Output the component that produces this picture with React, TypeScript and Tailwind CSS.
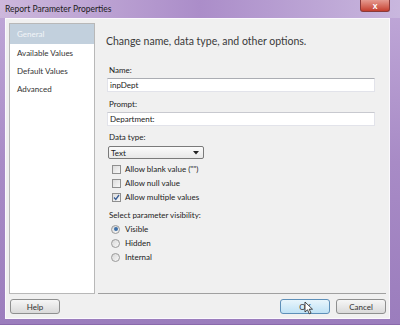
import React from 'react';

const font = { fontFamily: 'Lato, "Noto Sans", Arial, sans-serif' };

const navItems = ['Available Values', 'Default Values', 'Advanced'];

const checks = [
  { label: 'Allow blank value ("")', checked: false },
  { label: 'Allow null value', checked: false },
  { label: 'Allow multiple values', checked: true },
];

const radios = [
  { label: 'Visible', checked: true },
  { label: 'Hidden', checked: false },
  { label: 'Internal', checked: false },
];

const CheckBox: React.FC<{ checked: boolean }> = ({ checked }) => (
  <div className="w-[9px] h-[9px] border border-[#8f8f8f] bg-gradient-to-br from-[#dcdcdc] to-[#f8f8f8] flex items-center justify-center">
    {checked && (
      <svg width="7" height="7" viewBox="0 0 7 7">
        <path d="M1 3.5 L2.8 5.5 L6 1" stroke="#3a5e96" strokeWidth="1.3" fill="none" />
      </svg>
    )}
  </div>
);

const Radio: React.FC<{ checked: boolean }> = ({ checked }) => (
  <div className="w-[9px] h-[9px] rounded-full border border-[#9a9a9a] bg-gradient-to-br from-[#d8d8d8] to-[#f8f8f8] flex items-center justify-center">
    {checked && <div className="w-[4px] h-[4px] rounded-full bg-[#3d6fa8]" />}
  </div>
);

const Btn: React.FC<{ label: string; primary?: boolean }> = ({ label, primary }) => (
  <div
    className={`w-[50px] h-[15px] rounded-[3px] border flex items-center justify-center text-[8px] text-[#333] ${
      primary
        ? 'border-[#5d8fb8] bg-gradient-to-b from-[#e8f5fc] to-[#bfe2f5]'
        : 'border-[#8e8f8f] bg-gradient-to-b from-[#f6f6f6] to-[#dadada]'
    }`}
  >
    {label}
  </div>
);

export default function App() {
  return (
    <div className="w-[400px] h-[327px] bg-white overflow-hidden" style={font}>
      <div className="w-[400px] h-[325px] flex flex-col bg-gradient-to-b from-[#c0a8d8] via-[#a88bc6] to-[#9b7dbd] rounded-t-[5px] border-b border-[#8a6aab]">
        {/* title bar */}
        <div className="h-[18px] flex items-start justify-between bg-gradient-to-r from-[#cdb8dc] via-[#ab8dc9] to-[#c9b7de]">
          <div className="pl-[5px] pt-[4px] text-[8.5px] leading-[11px] text-[#1c1c1c]">Report Parameter Properties</div>
          <div className="mr-[10px] w-[30px] h-[12px] rounded-b-[3px] border border-t-0 border-[#8a3a3a] bg-gradient-to-b from-[#e59a90] to-[#c43d2e] flex items-center justify-center text-white text-[9px] font-bold leading-none">
            x
          </div>
        </div>

        {/* body */}
        <div className="flex-1 ml-[5px] mr-[10px] mb-[5px] bg-[#f0f0f0] border border-[#fbf9fd] flex flex-col px-[3px] pt-[4px] pb-[4px]">
          <div className="flex flex-1 gap-[3px]">
            {/* nav */}
            <div className="w-[86px] bg-white border border-[#b8b8b8] flex flex-col text-[8px] text-[#333]">
              <div className="h-[20px] flex items-center pl-[7px] bg-[#c2d0dd] text-[#f2f5f8]">General</div>
              {navItems.map((n) => (
                <div key={n} className="h-[18px] flex items-center pl-[7px]">
                  {n}
                </div>
              ))}
            </div>

            {/* content */}
            <div className="flex-1 border-b border-[#a0a0a0] flex flex-col pl-[11px] pr-[11px] pt-[10px] text-[8px] text-[#222]">
              <div className="ml-[-3px] text-[10.5px] leading-[16px] text-[#3a3a3a]">Change name, data type, and other options.</div>

              <div className="mt-[15px] h-[12px] leading-[12px]">Name:</div>
              <div className="mt-[2px] ml-[-2px] h-[14px] bg-white border border-[#e2e3ea] border-t-[#abadb3] flex items-center pl-[2px]">inpDept</div>

              <div className="mt-[6px] h-[12px] leading-[12px]">Prompt:</div>
              <div className="mt-[2px] ml-[-2px] h-[14px] bg-white border border-[#e2e3ea] border-t-[#c8c9cf] flex items-center pl-[2px]">Department:</div>

              <div className="mt-[5px] h-[12px] leading-[12px]">Data type:</div>
              <div className="mt-[3px] ml-[-1px] w-[96px] h-[13px] rounded-[2px] border border-[#7a7a7a] bg-gradient-to-b from-[#fbfbfb] to-[#e8e8e8] flex items-center justify-between pl-[2px] pr-[4px]">
                <span>Text</span>
                <svg width="6" height="4" viewBox="0 0 6 4">
                  <path d="M0 0 L6 0 L3 3.5 Z" fill="#222" />
                </svg>
              </div>

              <div className="mt-[3px] flex flex-col">
                {checks.map((c) => (
                  <div key={c.label} className="h-[14px] flex items-center pl-[3px] gap-[4px]">
                    <CheckBox checked={c.checked} />
                    <span>{c.label}</span>
                  </div>
                ))}
              </div>

              <div className="mt-[5px] h-[12px] leading-[12px]">Select parameter visibility:</div>
              <div className="mt-[1px] flex flex-col">
                {radios.map((r) => (
                  <div key={r.label} className="h-[14px] flex items-center pl-[2px] gap-[5px]">
                    <Radio checked={r.checked} />
                    <span>{r.label}</span>
                  </div>
                ))}
              </div>
            </div>
          </div>

          {/* buttons */}
          <div className="mt-[5px] flex items-center">
            <div className="ml-[1px]">
              <Btn label="Help" />
            </div>
            <div className="ml-auto flex gap-[6px] relative">
              <Btn label="OK" primary />
              <Btn label="Cancel" />
              <svg className="absolute left-[24px] top-[2px]" width="10" height="14" viewBox="0 0 10 14">
                <path d="M1 1 L1 11 L3.5 8.8 L5.3 12.8 L7 12 L5.2 8.2 L8.5 8.2 Z" fill="#fff" stroke="#222" strokeWidth="0.8" />
              </svg>
            </div>
          </div>
        </div>
      </div>
    </div>
  );
}
